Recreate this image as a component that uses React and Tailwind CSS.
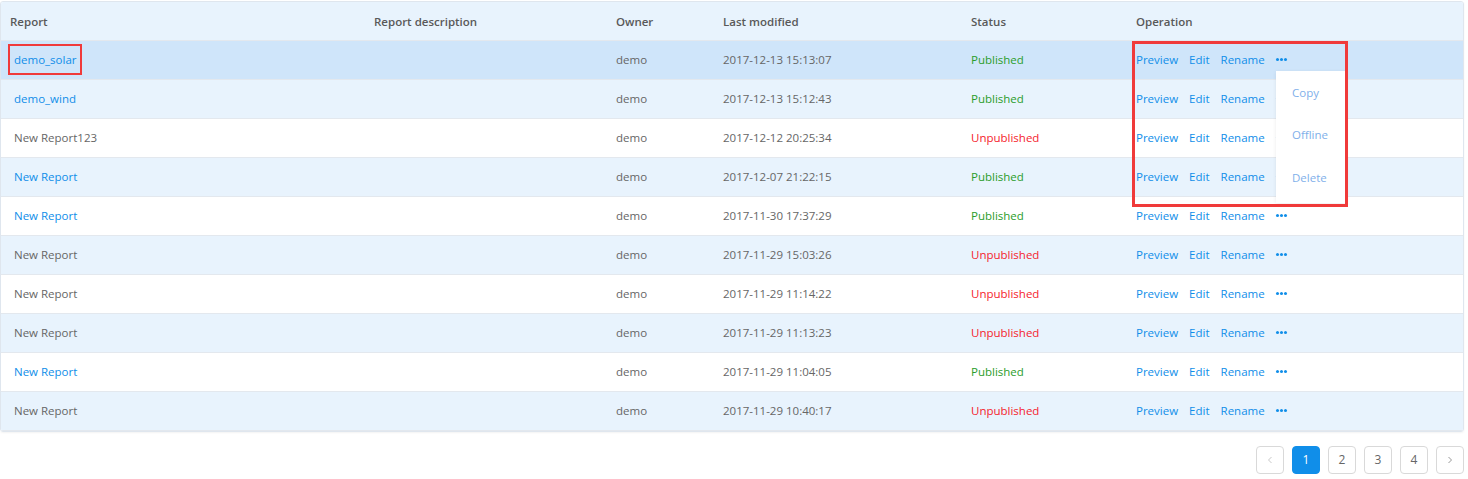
import React from 'react';

const rows = [
  { name: 'demo_solar', link: true, date: '2017-12-13 15:13:07', published: true },
  { name: 'demo_wind', link: true, date: '2017-12-13 15:12:43', published: true },
  { name: 'New Report123', link: false, date: '2017-12-12 20:25:34', published: false },
  { name: 'New Report', link: true, date: '2017-12-07 21:22:15', published: true },
  { name: 'New Report', link: true, date: '2017-11-30 17:37:29', published: true },
  { name: 'New Report', link: false, date: '2017-11-29 15:03:26', published: false },
  { name: 'New Report', link: false, date: '2017-11-29 11:14:22', published: false },
  { name: 'New Report', link: false, date: '2017-11-29 11:13:23', published: false },
  { name: 'New Report', link: true, date: '2017-11-29 11:04:05', published: true },
  { name: 'New Report', link: false, date: '2017-11-29 10:40:17', published: false },
];

const cols = 'grid grid-cols-[364px_242px_107px_248px_165px_1fr] items-center';

function Row({ row, index }) {
  // first row is hovered, the rest stripe
  const bg = index === 0 ? 'bg-[#cfe5fa]' : index % 2 === 1 ? 'bg-[#e8f3fd]' : 'bg-white';
  return (
    <div className={`${cols} h-[39px] border-b border-[#e3e8ee] ${bg} text-[#666]`}>
      <div className={`pl-[13px] ${row.link ? 'text-[#108ee9]' : ''}`}>{row.name}</div>
      <div></div>
      <div className="pl-[9px]">demo</div>
      <div className="pl-[9px]">{row.date}</div>
      <div className={`pl-[9px] ${row.published ? 'text-[#2a9d2a]' : 'text-[#f5222d]'}`}>
        {row.published ? 'Published' : 'Unpublished'}
      </div>
      <div className="pl-[9px] flex items-center text-[#108ee9]">
        <span>Preview</span>
        <span className="ml-[11px]">Edit</span>
        <span className="ml-[11px]">Rename</span>
        <span className="ml-[11px] flex gap-[1px] pb-[2px]">
          <span className="w-[3px] h-[3px] rounded-full bg-[#108ee9]" />
          <span className="w-[3px] h-[3px] rounded-full bg-[#108ee9]" />
          <span className="w-[3px] h-[3px] rounded-full bg-[#108ee9]" />
        </span>
      </div>
    </div>
  );
}

function PageButton({ children, active, muted }) {
  return (
    <div
      className={`w-[28px] h-[28px] flex items-center justify-center rounded-[4px] border text-[12px] ${
        active
          ? 'bg-[#108ee9] border-[#108ee9] text-white'
          : muted
          ? 'border-[#d9d9d9] text-[#c8c8c8]'
          : 'border-[#d9d9d9] text-[#666]'
      }`}
    >
      {children}
    </div>
  );
}

export default function App() {
  return (
    <div
      className="relative w-[1468px] h-[479px] bg-white text-[11.5px]"
      style={{ fontFamily: '"Open Sans", "Noto Sans", sans-serif' }}
    >
      <div className="pt-px w-[1464px]">
        <div className="border border-[#dfe6ee] rounded-[3px] overflow-hidden shadow-[0_1px_2px_rgba(0,0,0,0.05)]">
          <div className={`${cols} h-[39px] bg-[#e8f3fd] border-b border-[#e3e8ee] font-semibold text-[#595959]`}>
            <div className="pl-[9px] pt-px">Report</div>
            <div className="pl-[9px] pt-px">Report description</div>
            <div className="pl-[9px] pt-px">Owner</div>
            <div className="pl-[9px] pt-px">Last modified</div>
            <div className="pl-[9px] pt-px">Status</div>
            <div className="pl-[9px] pt-px">Operation</div>
          </div>
          {rows.map((row, i) => (
            <Row key={i} row={row} index={i} />
          ))}
        </div>
      </div>

      <div className="flex justify-end gap-[8px] mt-[14px] pr-[4px]">
        <PageButton muted>
          <svg width="8" height="8" viewBox="0 0 8 8" fill="none" stroke="currentColor" strokeWidth="1">
            <path d="M5.5 1 L2.5 4 L5.5 7" />
          </svg>
        </PageButton>
        <PageButton active>1</PageButton>
        <PageButton>2</PageButton>
        <PageButton>3</PageButton>
        <PageButton>4</PageButton>
        <PageButton>
          <svg width="8" height="8" viewBox="0 0 8 8" fill="none" stroke="#999" strokeWidth="1">
            <path d="M2.5 1 L5.5 4 L2.5 7" />
          </svg>
        </PageButton>
      </div>

      {/* dropdown menu */}
      <div className="absolute left-[1276px] top-[71px] w-[70px] h-[132px] bg-white shadow-[0_1px_4px_rgba(0,0,0,0.08)] text-[#7fb0ea]">
        <div className="pl-[16px] pt-[13px]">Copy</div>
        <div className="pl-[16px] pt-[25px]">Offline</div>
        <div className="pl-[16px] pt-[25px]">Delete</div>
      </div>

      {/* annotation boxes */}
      <div className="absolute left-[8px] top-[44px] w-[74px] h-[31px] border-2 border-[#f03a3a]" />
      <div className="absolute left-[1132px] top-[41px] w-[216px] h-[166px] border-[3px] border-[#f03a3a]" />
    </div>
  );
}
